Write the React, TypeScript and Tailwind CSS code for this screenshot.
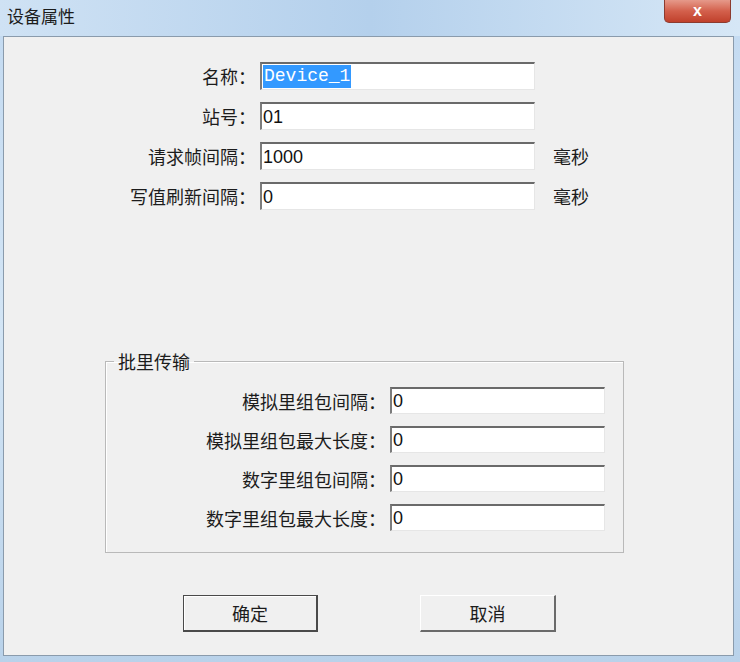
import React from 'react';

const cjk = { fontFamily: '"Noto Sans CJK SC", "Noto Sans", sans-serif' };

function Field({ value, selected, mono }: { value: string; selected?: boolean; mono?: boolean }) {
  return (
    <div className="flex h-full w-full items-center border-t-2 border-l-2 border-r border-b border-t-[#6a6a6a] border-l-[#7c7c7c] border-r-[#e6e6e6] border-b-[#e6e6e6] bg-white pl-[1px]">
      {selected ? (
        <span
          className="bg-[#3399ff] px-[1px] text-[18px] leading-[23px] text-white"
          style={{ fontFamily: '"Liberation Mono", monospace' }}
        >
          {value}
        </span>
      ) : (
        <span
          className={mono ? 'text-[18px]' : 'text-[18px] leading-[22px] text-[#111]'}
          style={{ fontFamily: '"Liberation Sans", Arial, sans-serif' }}
        >
          {value}
        </span>
      )}
    </div>
  );
}

const topRows = [
  { label: '名称：', value: 'Device_1', selected: true, unit: '' },
  { label: '站号：', value: '01', unit: '' },
  { label: '请求帧间隔：', value: '1000', unit: '毫秒' },
  { label: '写值刷新间隔：', value: '0', unit: '毫秒' },
];

const groupRows = [
  { label: '模拟里组包间隔：', value: '0' },
  { label: '模拟里组包最大长度：', value: '0' },
  { label: '数字里组包间隔：', value: '0' },
  { label: '数字里组包最大长度：', value: '0' },
];

export default function App() {
  return (
    <div
      className="flex h-[662px] w-[740px] flex-col overflow-hidden bg-gradient-to-b from-[#c3daf1] via-[#d3e5f5] to-[#b9d2ea]"
      style={cjk}
    >
      {/* title bar */}
      <div className="flex h-[36px] shrink-0 items-start justify-between bg-gradient-to-r from-[#cfe2f4] via-[#b4d0ec] to-[#d6e7f6]">
        <div className="pl-[7px] pt-[4px] text-[17px] leading-[24px] text-[#1b1b1b]">设备属性</div>
        <div className="mr-[9px] flex h-[23px] w-[67px] items-center justify-center rounded-b-[5px] border border-t-0 border-[#8c3b2f] bg-gradient-to-b from-[#e5998a] via-[#d3604c] to-[#c0402b] text-[16px] font-bold leading-none text-white">
          <span style={{ fontFamily: '"Liberation Sans", Arial, sans-serif' }}>x</span>
        </div>
      </div>

      {/* client area */}
      <div className="ml-[3px] h-[620px] w-[731px] border border-[#8a9bac] bg-[#f0f0f0] text-[#1c1c1c]">
        <div className="flex flex-col gap-[12px] pt-[25px]">
          {topRows.map((r) => (
            <div key={r.label} className="flex h-[28px] items-center">
              <div className="w-[252px] text-right text-[18px] leading-[24px]">{r.label}</div>
              <div className="ml-[4px] h-full w-[275px]">
                <Field value={r.value} selected={r.selected} />
              </div>
              {r.unit && <div className="ml-[18px] text-[18px] leading-[24px]">{r.unit}</div>}
            </div>
          ))}
        </div>

        <fieldset className="ml-[101px] mt-[139px] h-[204px] w-[519px] border border-[#b9b9b9] p-0 shadow-[inset_1px_1px_0_#fff]">
          <legend className="ml-[8px] px-[4px] text-[18px] leading-[24px]">批里传输</legend>
          <div className="flex flex-col gap-[12px] pt-[14px]">
            {groupRows.map((r) => (
              <div key={r.label} className="flex h-[27px] items-center">
                <div className="w-[280px] text-right text-[18px] leading-[24px]">{r.label}</div>
                <div className="ml-[4px] h-full w-[215px]">
                  <Field value={r.value} />
                </div>
              </div>
            ))}
          </div>
        </fieldset>

        <div className="ml-[179px] mt-[42px] flex gap-[102px]">
          <button className="flex h-[37px] w-[135px] items-center justify-center border border-[#4a4a4a] border-r-2 border-b-2 bg-[#f0f0f0] text-[18px] shadow-[inset_1px_1px_0_#fff]">
            确定
          </button>
          <button className="flex h-[37px] w-[136px] items-center justify-center border-t border-l border-r-2 border-b-2 border-t-white border-l-white border-r-[#6a6a6a] border-b-[#6a6a6a] bg-[#f0f0f0] text-[18px]">
            取消
          </button>
        </div>
      </div>
    </div>
  );
}
